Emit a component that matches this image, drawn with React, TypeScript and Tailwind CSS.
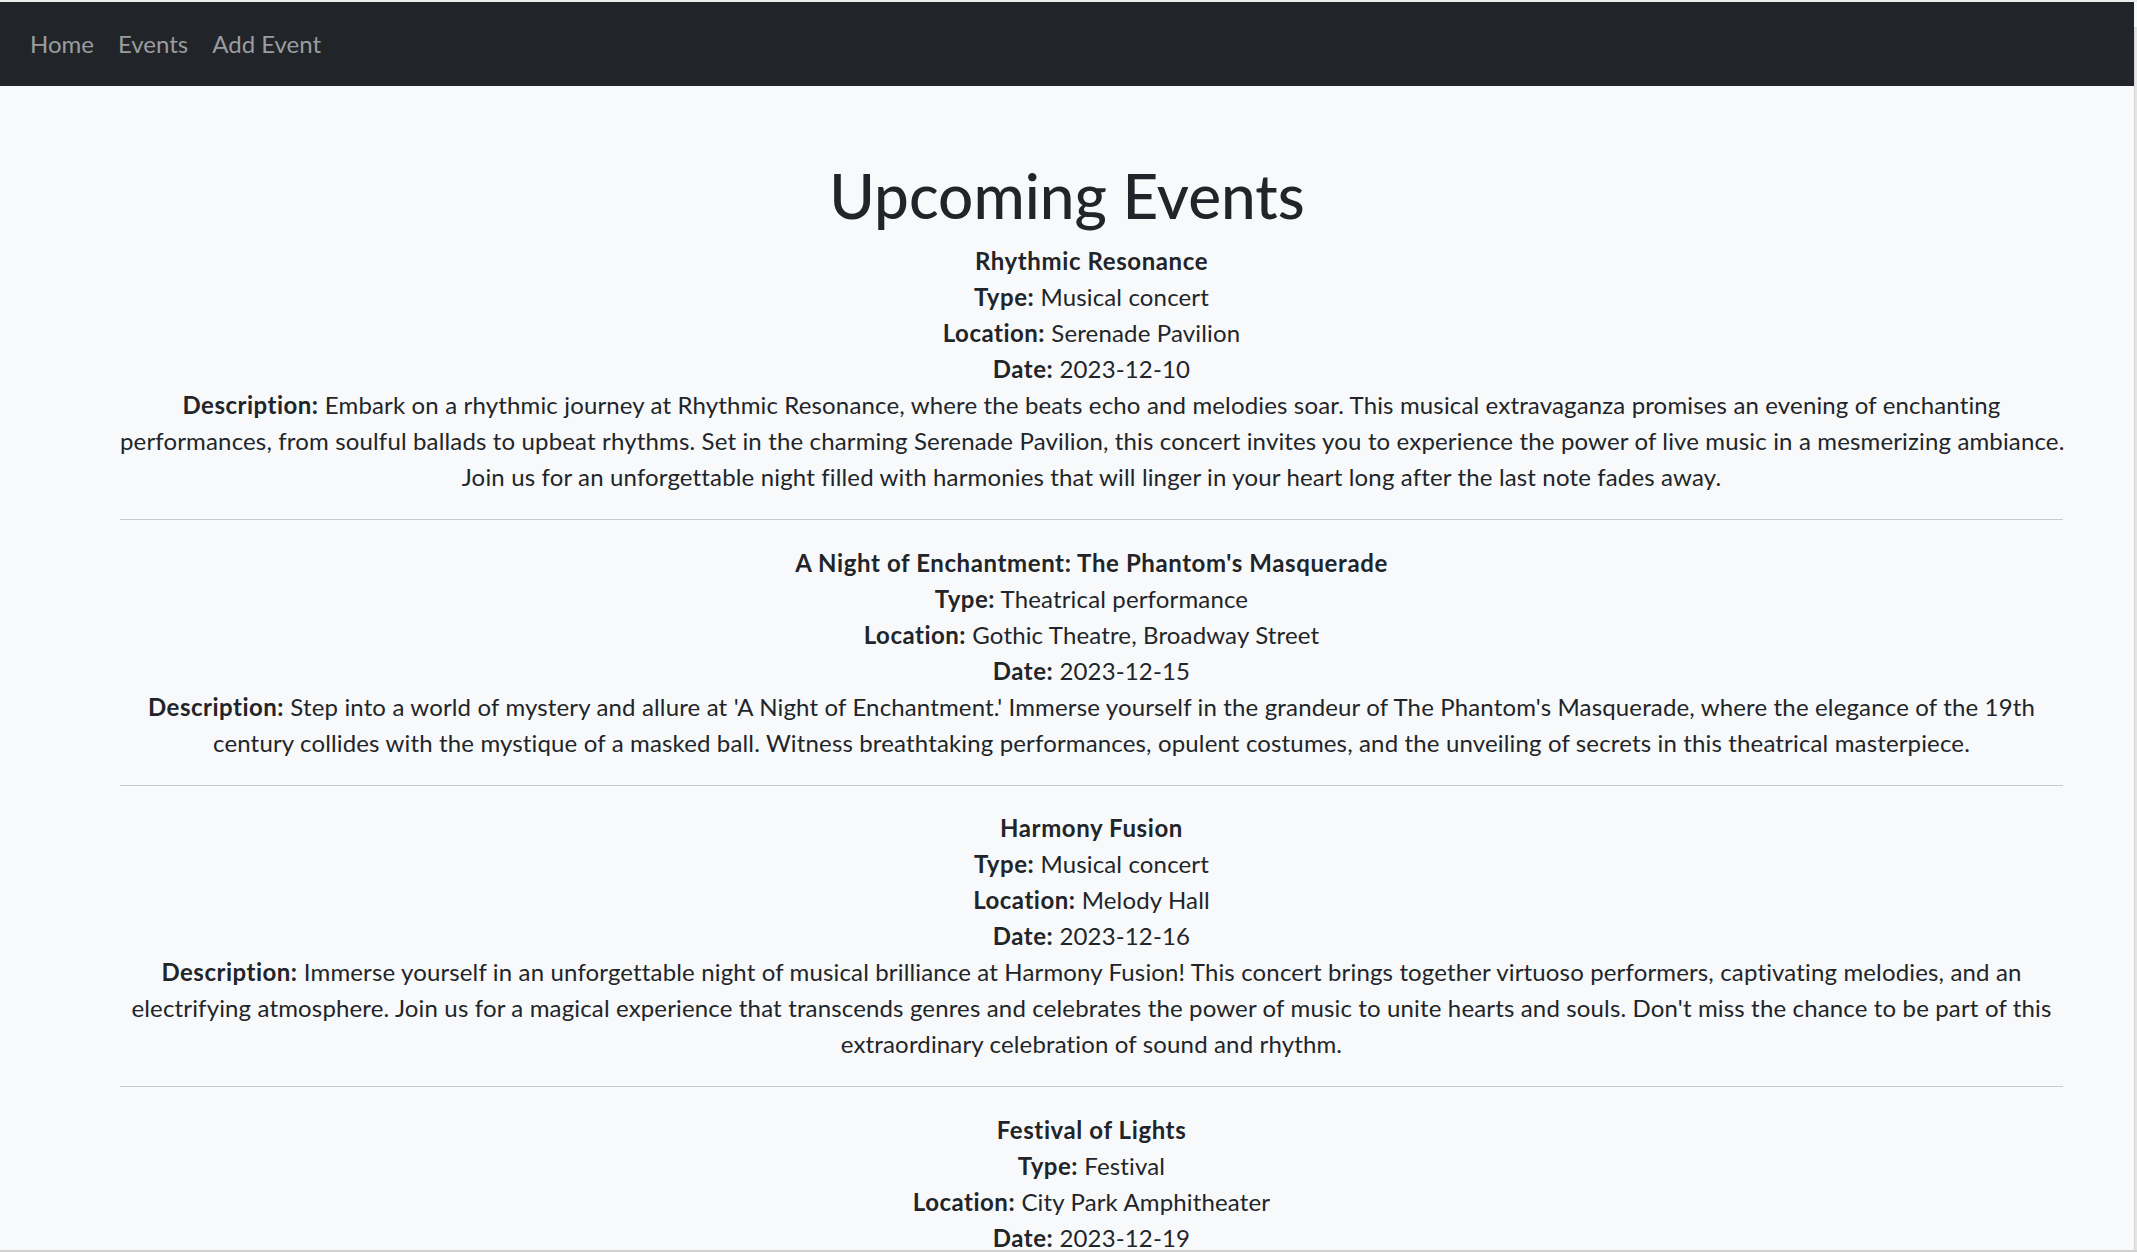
import React from "react";

type Ev = {
  title: string;
  type: string;
  location: string;
  date: string;
  desc: string[];
};

const events: Ev[] = [
  {
    title: "Rhythmic Resonance",
    type: "Musical concert",
    location: "Serenade Pavilion",
    date: "2023-12-10",
    desc: [
      "Embark on a rhythmic journey at Rhythmic Resonance, where the beats echo and melodies soar. This musical extravaganza promises an evening of enchanting",
      "performances, from soulful ballads to upbeat rhythms. Set in the charming Serenade Pavilion, this concert invites you to experience the power of live music in a mesmerizing ambiance.",
      "Join us for an unforgettable night filled with harmonies that will linger in your heart long after the last note fades away.",
    ],
  },
  {
    title: "A Night of Enchantment: The Phantom's Masquerade",
    type: "Theatrical performance",
    location: "Gothic Theatre, Broadway Street",
    date: "2023-12-15",
    desc: [
      "Step into a world of mystery and allure at 'A Night of Enchantment.' Immerse yourself in the grandeur of The Phantom's Masquerade, where the elegance of the 19th",
      "century collides with the mystique of a masked ball. Witness breathtaking performances, opulent costumes, and the unveiling of secrets in this theatrical masterpiece.",
    ],
  },
  {
    title: "Harmony Fusion",
    type: "Musical concert",
    location: "Melody Hall",
    date: "2023-12-16",
    desc: [
      "Immerse yourself in an unforgettable night of musical brilliance at Harmony Fusion! This concert brings together virtuoso performers, captivating melodies, and an",
      "electrifying atmosphere. Join us for a magical experience that transcends genres and celebrates the power of music to unite hearts and souls. Don't miss the chance to be part of this",
      "extraordinary celebration of sound and rhythm.",
    ],
  },
  {
    title: "Festival of Lights",
    type: "Festival",
    location: "City Park Amphitheater",
    date: "2023-12-19",
    desc: [
      "Experience the magic of the Festival of Lights, a dazzling celebration of color and joy.",
    ],
  },
];

function EventItem({ ev, last }: { ev: Ev; last: boolean }) {
  return (
    <div>
      <div className="text-center text-[24px] leading-[36px] tracking-[0.15px] text-[#212529]">
        <div className="font-bold tracking-[0.6px]">{ev.title}</div>
        <div>
          <span className="font-bold tracking-[0.5px]">Type:</span> {ev.type}
        </div>
        <div>
          <span className="font-bold tracking-[0.5px]">Location:</span> {ev.location}
        </div>
        <div>
          <span className="font-bold tracking-[0.5px]">Date:</span> {ev.date}
        </div>
        <div className="whitespace-nowrap">
          <span className="font-bold tracking-[0.5px]">Description:</span> {ev.desc[0]}
          {ev.desc.slice(1).map((l, i) => (
            <React.Fragment key={i}>
              <br />
              {l}
            </React.Fragment>
          ))}
        </div>
      </div>
      {!last && <hr className="mt-[24px] mb-[24.5px] border-0 border-t border-[#c8c9ca]" />}
    </div>
  );
}

export default function App() {
  return (
    <div
      className="h-[1252px] overflow-hidden flex flex-col bg-[#f8f9fa]"
      style={{ fontFamily: "'Segoe UI', Lato, 'Noto Sans', sans-serif" }}
    >
      <div className="h-[2px] bg-[#ebebeb] shrink-0" />
      <div className="flex flex-1 min-h-0">
        <div className="flex-1 min-w-0 overflow-hidden">
          <nav className="bg-[#212529] h-[84px] px-[18px] py-[12px] flex items-center">
            <ul className="flex">
              {["Home", "Events", "Add Event"].map((n) => (
                <li key={n}>
                  <a className="block px-[12px] py-[12px] text-[24px] leading-[36px] text-[#9a9c9f]">
                    {n}
                  </a>
                </li>
              ))}
            </ul>
          </nav>
          <main className="mt-[73px]">
            <h1 className="text-center text-[62px] leading-[72px] font-medium text-[#212529] mb-[12px]">
              Upcoming Events
            </h1>
            <div className="ml-[120px] w-[1943px]">
              {events.map((ev, i) => (
                <EventItem key={i} ev={ev} last={i === events.length - 1} />
              ))}
            </div>
          </main>
        </div>
        <div className="w-[3px] shrink-0 bg-[#e4e4e4] border-l border-[#d6d6d6] mt-[25px]" />
      </div>
      <div className="h-[2px] bg-[#d2d2d2] shrink-0" />
    </div>
  );
}
